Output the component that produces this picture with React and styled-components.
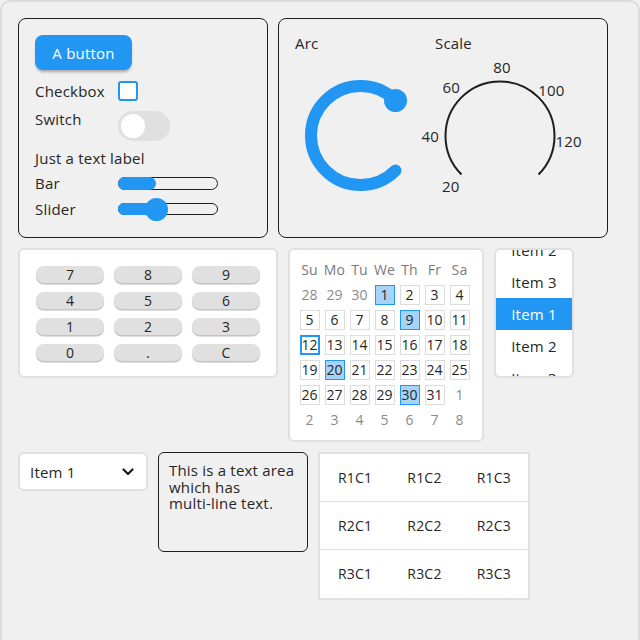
import React from "react";
import styled, { createGlobalStyle } from "styled-components";

const Global = createGlobalStyle`
  html, body { margin: 0; padding: 0; background: #f0f0f0; }
  #root { width: 640px; height: 640px; overflow: hidden; }
  * { box-sizing: border-box; }
`;

const BLUE = "#2196f3";
const TEXT = "#262626";
const FONT = `"Open Sans", "Liberation Sans", sans-serif`;

const Screen = styled.div`
  width: 640px;
  height: 680px;
  border: 2px solid #dcdcdc;
  border-radius: 10px;
  background: #f0f0f0;
  padding: 16px;
  display: flex;
  flex-wrap: wrap;
  align-items: flex-start;
  align-content: flex-start;
  gap: 10px;
  font-family: ${FONT};
  font-size: 15px;
  letter-spacing: 0.2px;
  color: ${TEXT};
`;

const OutlinePanel = styled.div`
  width: ${(p) => p.$w}px;
  height: ${(p) => p.$h}px;
  border: 1px solid #1e1e1e;
  border-radius: 8px;
  padding: 16px;
  display: flex;
  flex-direction: ${(p) => (p.$row ? "row" : "column")};
`;

const WhitePanel = styled.div`
  width: ${(p) => p.$w}px;
  height: ${(p) => p.$h}px;
  background: #fff;
  border: 2px solid #e0e0e0;
  border-radius: ${(p) => (p.$square ? 0 : 6)}px;
  overflow: hidden;
`;

/* ---------- panel 1 ---------- */
const Button = styled.button`
  align-self: flex-start;
  width: 97px;
  height: 35px;
  border: none;
  border-radius: 8px;
  background: ${BLUE};
  color: #fff;
  font-family: ${FONT};
  font-size: 15px;
  letter-spacing: 0.2px;
  box-shadow: 0 3px 3px -1px rgba(0, 0, 0, 0.3);
  padding: 0;
`;

const FieldRow = styled.div`
  display: flex;
  align-items: ${(p) => (p.$top ? "flex-start" : "center")};
  height: ${(p) => p.$h}px;
  margin-top: ${(p) => p.$mt}px;
`;

const FieldLabel = styled.span`
  width: 83px;
  line-height: 17px;
  flex: none;
`;

const TextLabel = styled.div`
  line-height: 17px;
  margin-top: 9px;
`;

const CheckBox = styled.div`
  width: 20px;
  height: 20px;
  border: 2px solid ${BLUE};
  border-radius: 3px;
  background: #fff;
`;

const Switch = styled.div`
  width: 52px;
  height: 30px;
  border-radius: 15px;
  background: #e0e0e0;
  padding: 3px;
  display: flex;
  align-items: center;
`;

const SwitchKnob = styled.div`
  width: 24px;
  height: 24px;
  border-radius: 50%;
  background: #fff;
`;

const Track = styled.div`
  position: relative;
  width: 100px;
  height: ${(p) => p.$h}px;
  border: 1px solid #1e1e1e;
  border-radius: 8px;
`;

const TrackFill = styled.div`
  position: absolute;
  left: -1px;
  top: -1px;
  bottom: -1px;
  border-radius: 8px;
  background: ${BLUE};
`;

const SliderKnob = styled.div`
  position: absolute;
  top: 50%;
  width: 23px;
  height: 23px;
  margin-top: -11.5px;
  margin-left: -11.5px;
  border-radius: 50%;
  background: ${BLUE};
`;

/* ---------- panel 2 ---------- */
const GaugeColumn = styled.div`
  display: flex;
  flex-direction: column;
  width: ${(p) => p.$w}px;
`;

const Caption = styled.div`
  line-height: 17px;
`;

const ArcSvg = styled.svg`
  margin-top: 23px;
  margin-left: 5px;
  overflow: visible;
`;

const ScaleSvg = styled.svg`
  margin-top: 4px;
  overflow: visible;
  font-family: ${FONT};
  font-size: 15px;
`;

/* ---------- keypad ---------- */
const KeyGrid = styled.div`
  display: grid;
  grid-template-columns: repeat(3, 68px);
  grid-auto-rows: 17px;
  column-gap: 10px;
  row-gap: 9px;
  padding: 16px;
`;

const Key = styled.div`
  background: #e0e0e0;
  border-radius: 8px;
  box-shadow: 0 1.5px 1px rgba(0, 0, 0, 0.25);
  display: flex;
  align-items: center;
  justify-content: center;
  font-size: 14px;
  line-height: 17px;
`;

/* ---------- calendar ---------- */
const CalGrid = styled.div`
  display: grid;
  grid-template-columns: repeat(7, 25px);
  grid-auto-rows: 25px;
  padding: 7px 0 8px 7px;
`;

const CalHead = styled.div`
  display: flex;
  align-items: center;
  justify-content: center;
  color: #7a7a7a;
  font-size: 14px;
`;

const CalCell = styled.div`
  display: flex;
  align-items: center;
  justify-content: center;
`;

const Day = styled.div`
  width: 20px;
  height: 20px;
  display: flex;
  align-items: center;
  justify-content: center;
  font-size: 14px;
  letter-spacing: 0;
  color: ${(p) => (p.$other ? "#8a8a8a" : TEXT)};
  background: ${(p) => (p.$hl ? "#a6d3f8" : p.$other ? "transparent" : "#fff")};
  border: ${(p) =>
    p.$today
      ? `2px solid ${BLUE}`
      : p.$hl
      ? `1px solid ${BLUE}`
      : p.$other
      ? "none"
      : "1px solid #dcdcdc"};
`;

/* ---------- roller ---------- */
const RollerList = styled.div`
  margin-top: -16px;
  display: flex;
  flex-direction: column;
`;

const RollerItem = styled.div`
  height: 32px;
  display: flex;
  align-items: center;
  justify-content: center;
  background: ${(p) => (p.$sel ? BLUE : "transparent")};
  color: ${(p) => (p.$sel ? "#fff" : TEXT)};
`;

/* ---------- dropdown ---------- */
const Dropdown = styled.div`
  width: 130px;
  height: 39px;
  background: #fff;
  border: 2px solid #e0e0e0;
  border-radius: 6px;
  padding: 0 12px 0 10px;
  display: flex;
  align-items: center;
  justify-content: space-between;
`;

/* ---------- text area ---------- */
const TextArea = styled.div`
  width: 150px;
  height: 100px;
  border: 1px solid #1e1e1e;
  border-radius: 6px;
  padding: 9px 10px;
  line-height: 16.5px;
  white-space: pre-line;
`;

/* ---------- table ---------- */
const TableRow = styled.div`
  display: grid;
  grid-template-columns: repeat(3, 1fr);
  height: ${(p) => (p.$last ? 46 : 48)}px;
  border-bottom: ${(p) => (p.$last ? "none" : "1px solid #e0e0e0")};
`;

const TableCell = styled.div`
  display: flex;
  align-items: center;
  padding-left: 18px;
  font-size: 14px;
`;

const keys = ["7", "8", "9", "4", "5", "6", "1", "2", "3", "0", ".", "C"];

const calRows = [
  [[28, "o"], [29, "o"], [30, "o"], [1, "h"], [2], [3], [4]],
  [[5], [6], [7], [8], [9, "h"], [10], [11]],
  [[12, "t"], [13], [14], [15], [16], [17], [18]],
  [[19], [20, "h"], [21], [22], [23], [24], [25]],
  [[26], [27], [28], [29], [30, "h"], [31], [1, "o"]],
  [[2, "o"], [3, "o"], [4, "o"], [5, "o"], [6, "o"], [7, "o"], [8, "o"]],
];

const scaleLabels = [
  ["20", 15.7, 129.3],
  ["40", -4.7, 79.3],
  ["60", 16.3, 29.7],
  ["80", 67, 10.3],
  ["100", 116.3, 33],
  ["120", 133.7, 84.3],
];

export default function App() {
  return (
    <>
      <Global />
      <Screen>
        <OutlinePanel $w={250} $h={220}>
          <Button>A button</Button>
          <FieldRow $h={20} $mt={11}>
            <FieldLabel>Checkbox</FieldLabel>
            <CheckBox />
          </FieldRow>
          <FieldRow $h={30} $mt={10} $top>
            <FieldLabel>Switch</FieldLabel>
            <Switch>
              <SwitchKnob />
            </Switch>
          </FieldRow>
          <TextLabel>Just a text label</TextLabel>
          <FieldRow $h={13} $mt={10}>
            <FieldLabel>Bar</FieldLabel>
            <Track $h={13}>
              <TrackFill style={{ width: 38 }} />
            </Track>
          </FieldRow>
          <FieldRow $h={12} $mt={13}>
            <FieldLabel>Slider</FieldLabel>
            <Track $h={12}>
              <TrackFill style={{ width: 39 }} />
              <SliderKnob style={{ left: 37.5 }} />
            </Track>
          </FieldRow>
        </OutlinePanel>

        <OutlinePanel $w={330} $h={220} $row>
          <GaugeColumn $w={140}>
            <Caption>Arc</Caption>
            <ArcSvg width="122" height="122" viewBox="0 0 122 122">
              <path
                d="M 95.5 95.5 A 49.5 49.5 0 1 1 95.5 25.5"
                fill="none"
                stroke={BLUE}
                strokeWidth="12"
                strokeLinecap="round"
              />
              <circle cx="95.5" cy="25.5" r="11.5" fill={BLUE} />
            </ArcSvg>
          </GaugeColumn>
          <GaugeColumn $w={150}>
            <Caption>Scale</Caption>
            <ScaleSvg width="160" height="140" viewBox="0 0 160 140">
              <path
                d="M 26.5 118.5 A 54.5 54.5 0 1 1 103.5 118.5"
                fill="none"
                stroke="#1e1e1e"
                strokeWidth="2"
              />
              {scaleLabels.map(([t, x, y]) => (
                <text
                  key={t}
                  x={x}
                  y={y + 1}
                  textAnchor="middle"
                  dominantBaseline="central"
                  fill={TEXT}
                >
                  {t}
                </text>
              ))}
            </ScaleSvg>
          </GaugeColumn>
        </OutlinePanel>

        <WhitePanel $w={260} $h={130}>
          <KeyGrid>
            {keys.map((k) => (
              <Key key={k}>{k}</Key>
            ))}
          </KeyGrid>
        </WhitePanel>

        <WhitePanel $w={196} $h={194}>
          <CalGrid>
            {["Su", "Mo", "Tu", "We", "Th", "Fr", "Sa"].map((d) => (
              <CalHead key={d}>{d}</CalHead>
            ))}
            {calRows.flat().map(([n, f], i) => (
              <CalCell key={i}>
                <Day $other={f === "o"} $hl={f === "h"} $today={f === "t"}>
                  {n}
                </Day>
              </CalCell>
            ))}
          </CalGrid>
        </WhitePanel>

        <WhitePanel $w={80} $h={130}>
          <RollerList>
            <RollerItem>Item 2</RollerItem>
            <RollerItem>Item 3</RollerItem>
            <RollerItem $sel>Item 1</RollerItem>
            <RollerItem>Item 2</RollerItem>
            <RollerItem>Item 3</RollerItem>
          </RollerList>
        </WhitePanel>

        <Dropdown>
          <span>Item 1</span>
          <svg width="12" height="8" viewBox="0 0 12 8">
            <polyline
              points="1.5,1.5 6,6 10.5,1.5"
              fill="none"
              stroke="#1e1e1e"
              strokeWidth="2.3"
              strokeLinecap="round"
              strokeLinejoin="round"
            />
          </svg>
        </Dropdown>

        <TextArea>{"This is a text area\nwhich has\nmulti-line text."}</TextArea>

        <WhitePanel $w={212} $h={148} $square>
          {[1, 2, 3].map((r) => (
            <TableRow key={r} $last={r === 3}>
              {[1, 2, 3].map((c) => (
                <TableCell key={c}>{`R${r}C${c}`}</TableCell>
              ))}
            </TableRow>
          ))}
        </WhitePanel>
      </Screen>
    </>
  );
}
